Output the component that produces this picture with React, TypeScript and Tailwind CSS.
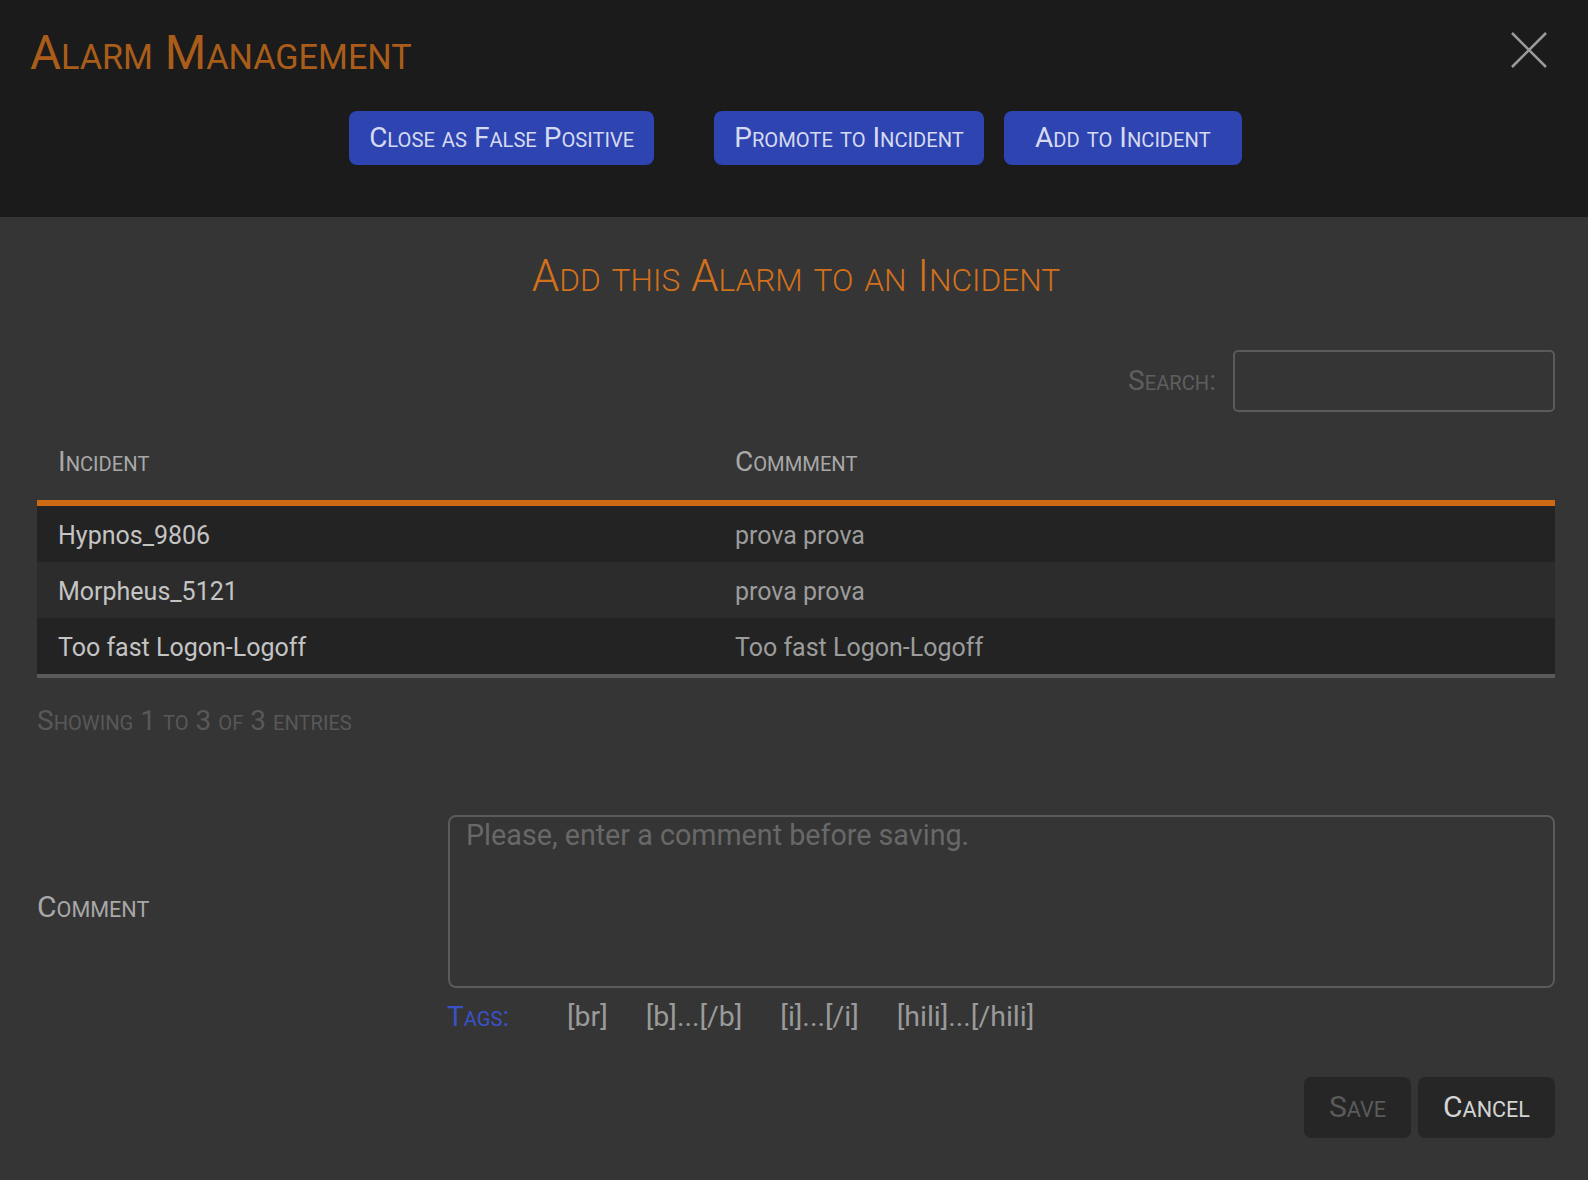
import React from "react";

function SC({ children }: { children: string }) {
  const parts = children.match(/[a-z]+|[^a-z]+/g) || [];
  return (
    <>
      {parts.map((p, i) =>
        /[a-z]/.test(p[0]) ? (
          <span key={i} className="uppercase text-[0.72em]">
            {p}
          </span>
        ) : (
          <span key={i}>{p}</span>
        )
      )}
    </>
  );
}

function TopButton({ children, className = "" }: { children: string; className?: string }) {
  return (
    <button
      className={`h-[54px] px-[20px] rounded-[8px] bg-[#2d44b1] text-[#d6daf0] text-[28px] leading-none flex items-center justify-center ${className}`}
    >
      <span>
        <SC>{children}</SC>
      </span>
    </button>
  );
}

const rows = [
  { incident: "Hypnos_9806", comment: "prova prova", bg: "bg-[#232323]" },
  { incident: "Morpheus_5121", comment: "prova prova", bg: "bg-[#2c2c2c]" },
  { incident: "Too fast Logon-Logoff", comment: "Too fast Logon-Logoff", bg: "bg-[#232323]" },
];

export default function App() {
  return (
    <div className="min-h-[1180px] w-full bg-[#353535] font-['Roboto',sans-serif]">
      {/* Header */}
      <div className="h-[217px] bg-[#1b1b1b] pl-[30px] pr-[41px]">
        <div className="flex items-start justify-between pt-[30px]">
          <h1 className="text-[47.5px] leading-none text-[#aa5d1a] font-normal">
            <SC>Alarm Management</SC>
          </h1>
          <svg width="36" height="36" viewBox="0 0 36 36" className="mt-[2px]">
            <path d="M1 1 L35 35 M35 1 L1 35" stroke="#9a9a9a" strokeWidth="2.6" fill="none" />
          </svg>
        </div>
        <div className="flex justify-center mt-[33px] pl-[14px]">
          <TopButton>Close as False Positive</TopButton>
          <TopButton className="ml-[60px]">Promote to Incident</TopButton>
          <TopButton className="ml-[20px] w-[238px]">Add to Incident</TopButton>
        </div>
      </div>

      {/* Body */}
      <div className="pl-[37px] pr-[33px]">
        <h2 className="pt-[37px] text-center text-[44px] leading-none font-light text-[#d2701c]">
          <SC>Add this Alarm to an Incident</SC>
        </h2>

        <div className="mt-[52px] flex justify-end items-center gap-[17px]">
          <span className="text-[28px] leading-none text-[#5e5e5e]">
            <SC>Search:</SC>
          </span>
          <input className="w-[322px] h-[62px] border-2 border-[#5a5a5a] rounded-[5px] bg-transparent outline-none px-3 text-[24px] text-[#c8c8c8]" />
        </div>

        {/* Table */}
        <div className="mt-[36px]">
          <div className="flex pb-[24px] border-b-[6px] border-[#cf6a14]">
            <div className="w-[677px] pl-[21px] text-[28px] leading-none text-[#a8a8a8]">
              <SC>Incident</SC>
            </div>
            <div className="flex-1 pl-[21px] text-[28px] leading-none text-[#a8a8a8]">
              <SC>Commment</SC>
            </div>
          </div>
          {rows.map((r) => (
            <div key={r.incident} className={`flex h-[56px] items-center pt-[3px] ${r.bg} text-[25px]`}>
              <div className="w-[677px] pl-[21px] text-[#c4c4c4]">{r.incident}</div>
              <div className="flex-1 pl-[21px] text-[#9c9c9c]">{r.comment}</div>
            </div>
          ))}
          <div className="h-[4px] bg-[#5a5a5a]" />
        </div>

        <div className="mt-[29px] text-[28px] leading-none text-[#585858]">
          <SC>Showing 1 to 3 of 3 entries</SC>
        </div>

        {/* Comment */}
        <div className="mt-[80px] flex items-center">
          <div className="w-[411px] text-[30px] leading-none text-[#a8a8a8] pt-[10px]">
            <SC>Comment</SC>
          </div>
          <textarea
            placeholder="Please, enter a comment before saving."
            className="flex-1 h-[173px] border-2 border-[#5a5a5a] rounded-[8px] bg-transparent outline-none resize-none pt-[2px] px-[16px] text-[28.7px] leading-[33px] text-[#c8c8c8] placeholder:text-[#686868]"
          />
        </div>
        <div className="mt-[15px] pl-[410px] flex items-center text-[28.5px] leading-none text-[#9a9a9a]">
          <span className="w-[120px] text-[#3a52c8] text-[28px]">
            <SC>Tags:</SC>
          </span>
          <div className="flex gap-[38px]">
            <span>[br]</span>
            <span>[b]...[/b]</span>
            <span>[i]...[/i]</span>
            <span>[hili]...[/hili]</span>
          </div>
        </div>

        <div className="mt-[45px] flex justify-end gap-[7px] pb-[43px]">
          <button className="h-[61px] px-[25px] rounded-[7px] bg-[#262626] text-[30px] leading-none text-[#5a5a5a]">
            <SC>Save</SC>
          </button>
          <button className="h-[61px] px-[25px] rounded-[7px] bg-[#262626] text-[30px] leading-none text-[#d4d4d4]">
            <SC>Cancel</SC>
          </button>
        </div>
      </div>
    </div>
  );
}
